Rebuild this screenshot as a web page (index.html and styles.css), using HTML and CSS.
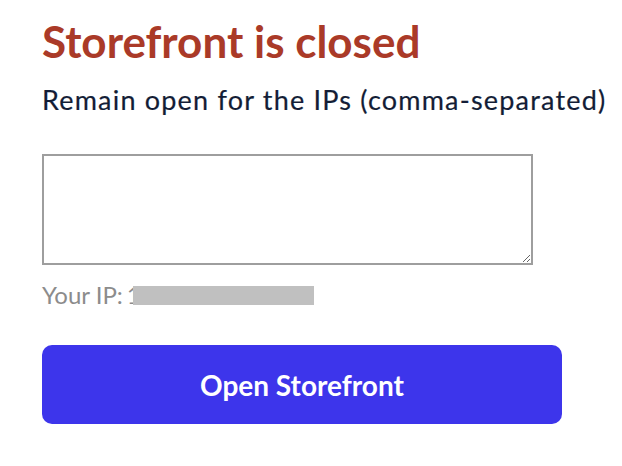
FILE: index.html
```html
<!DOCTYPE html>
<html>
<head>
<meta charset="utf-8">
<link rel="stylesheet" href="styles.css">
</head>
<body>
<div class="panel">
  <h1 class="title">Storefront is closed</h1>
  <label class="label" for="ips">Remain open for the IPs (comma-separated)</label>
  <textarea class="ips" id="ips"></textarea>
  <div class="yourip">Your IP: <span class="ipfirst">1</span><span class="redact"></span></div>
  <button class="open">Open Storefront</button>
</div>
</body>
</html>
```
FILE: styles.css
```css
html, body {
  margin: 0;
  padding: 0;
  background: #fff;
}
body {
  font-family: Lato, "Open Sans", sans-serif;
}
.panel {
  display: flex;
  flex-direction: column;
  align-items: flex-start;
  padding: 15px 0 0 42px;
}
.title {
  margin: 0;
  font-size: 44px;
  font-weight: 700;
  line-height: 52px;
  color: #aa3a28;
}
.label {
  margin-top: 17px;
  font-size: 27px;
  letter-spacing: 1.2px;
  line-height: 32px;
  color: #131d36;
  -webkit-text-stroke: 0.2px #131d36;
}
.ips {
  margin-top: 38px;
  width: 491px;
  height: 111px;
  box-sizing: border-box;
  border: 2px solid #9e9e9e;
  border-radius: 0;
  padding: 4px;
  resize: vertical;
  font-family: inherit;
}
.yourip {
  margin-top: 15px;
  font-size: 24px;
  line-height: 30px;
  color: #8c8c8c;
  display: flex;
  align-items: center;
}
.ipfirst {
  width: 6px;
  overflow: hidden;
  display: inline-block;
  margin-left: 4px;
}
.redact {
  display: inline-block;
  width: 181px;
  height: 19px;
  background: #c0c0c0;
}
.open {
  margin-top: 35px;
  width: 520px;
  height: 79px;
  border: none;
  border-radius: 10px;
  background: #3d35eb;
  color: #fff;
  font-family: inherit;
  font-size: 28px;
  font-weight: 700;
}
```
